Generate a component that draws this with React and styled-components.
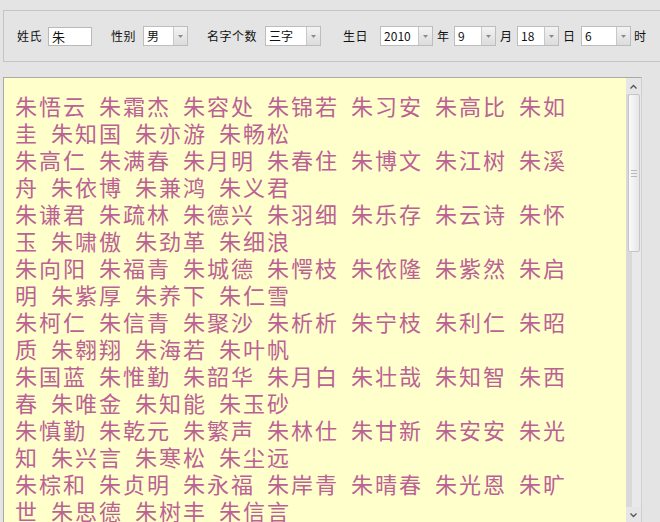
import React from 'react';
import styled, { createGlobalStyle } from 'styled-components';

const GlobalStyle = createGlobalStyle`
  html, body {
    margin: 0;
    padding: 0;
    background: #e4e4e4;
    overflow: hidden;
  }
  body {
    font-family: "Noto Sans CJK SC", "DejaVu Sans", sans-serif;
  }
`;

const Page = styled.div`
  width: 660px;
  height: 522px;
  box-sizing: border-box;
  padding: 10px 0 0 3px;
  overflow: hidden;
`;

const GroupBox = styled.div`
  width: 720px;
  height: 52px;
  box-sizing: border-box;
  border: 1px solid #c4c4c4;
  border-right: none;
  display: flex;
  align-items: center;
  padding-left: 13px;
`;

const Label = styled.span`
  font-size: 12px;
  line-height: 1;
  letter-spacing: 0.5px;
  color: #111;
  white-space: nowrap;
  margin-left: ${p => p.$ml || 0}px;
`;

const TextBox = styled.div`
  width: ${p => p.$w}px;
  height: 19px;
  box-sizing: border-box;
  margin-left: ${p => p.$ml || 0}px;
  border: 1px solid #b9b9b9;
  background: #fff;
  font-size: 13px;
  line-height: 17px;
  padding-left: 3px;
  color: #111;
`;

const SelectBox = styled.div`
  width: ${p => p.$w}px;
  height: 20px;
  box-sizing: border-box;
  margin-left: ${p => p.$ml || 0}px;
  display: flex;
  border: 1px solid #bdbdbd;
  background: #fff;
`;

const SelectValue = styled.div`
  flex: 1;
  font-size: 12px;
  line-height: 18px;
  padding-left: 3px;
  color: #111;
  white-space: nowrap;
`;

const SelectButton = styled.div`
  width: 13px;
  border-left: 1px solid #c8c8c8;
  background: linear-gradient(to bottom, #f3f3f3, #dcdcdc);
  display: flex;
  align-items: center;
  justify-content: center;
`;

const Panel = styled.div`
  width: 639px;
  height: 446px;
  box-sizing: border-box;
  margin-top: 15px;
  border-top: 1px solid #a9a9a9;
  border-left: 1px solid #a9a9a9;
  border-right: 1px solid #cfcfcf;
  display: flex;
`;

const Content = styled.div`
  flex: 1;
  background: #ffffcc;
  padding: 14px 0 0 11px;
  overflow: hidden;
`;

const Names = styled.div`
  width: 560px;
  font-size: 22px;
  line-height: 27px;
  letter-spacing: 2px;
  color: #ba6294;
`;

const Name = styled.span`
  margin-right: 12px;
`;

const ScrollBar = styled.div`
  width: 15px;
  display: flex;
  flex-direction: column;
  background: linear-gradient(to right, #d9d9d9 0, #d9d9d9 6px, #e9e9e9 6px);
`;

const ArrowButton = styled.div`
  height: 16px;
  flex: none;
  display: flex;
  align-items: center;
  justify-content: center;
  background: #e6e6e6;
`;

const Thumb = styled.div`
  height: 158px;
  margin: 0 1px 0 2px;
  box-sizing: border-box;
  border: 1px solid #c6c6c6;
  border-radius: 2px;
  background: linear-gradient(to right, #fafafa, #e6e6e6);
  display: flex;
  align-items: center;
  justify-content: center;
`;

const Grip = styled.div`
  width: 6px;
  height: 5px;
  border-top: 1px solid #b8b8b8;
  border-bottom: 1px solid #b8b8b8;
  position: relative;
  &::after {
    content: "";
    position: absolute;
    left: 0;
    right: 0;
    top: 2px;
    border-top: 1px solid #b8b8b8;
  }
`;

const Track = styled.div`
  flex: 1;
`;

function Chevron({ up, color = '#555', w = 7 }) {
  return (
    <svg width={w} height="5" viewBox="0 0 7 5">
      <path d={up ? 'M0.5 4.5 L3.5 1.5 L6.5 4.5' : 'M0.5 0.5 L3.5 3.5 L6.5 0.5'}
            fill="none" stroke={color} strokeWidth="1.3" />
    </svg>
  );
}

function Select({ value, w, ml }) {
  return (
    <SelectBox $w={w} $ml={ml}>
      <SelectValue>{value}</SelectValue>
      <SelectButton>
        <svg width="5" height="3" viewBox="0 0 5 3">
          <path d="M0 0 L2.5 3 L5 0 Z" fill="#8a8a8a" />
        </svg>
      </SelectButton>
    </SelectBox>
  );
}

const blocks = [
  '朱悟云 朱霜杰 朱容处 朱锦若 朱习安 朱高比 朱如圭 朱知国 朱亦游 朱畅松',
  '朱高仁 朱满春 朱月明 朱春住 朱博文 朱江树 朱溪舟 朱依博 朱兼鸿 朱义君',
  '朱谦君 朱疏林 朱德兴 朱羽细 朱乐存 朱云诗 朱怀玉 朱啸傲 朱劲革 朱细浪',
  '朱向阳 朱福青 朱城德 朱愕枝 朱依隆 朱紫然 朱启明 朱紫厚 朱养下 朱仁雪',
  '朱柯仁 朱信青 朱聚沙 朱析析 朱宁枝 朱利仁 朱昭质 朱翱翔 朱海若 朱叶帆',
  '朱国蓝 朱惟勤 朱韶华 朱月白 朱壮哉 朱知智 朱西春 朱唯金 朱知能 朱玉砂',
  '朱慎勤 朱乾元 朱繁声 朱林仕 朱甘新 朱安安 朱光知 朱兴言 朱寒松 朱尘远',
  '朱棕和 朱贞明 朱永福 朱岸青 朱晴春 朱光恩 朱旷世 朱思德 朱树丰 朱信言',
];

export default function App() {
  return (
    <Page>
      <GlobalStyle />
      <GroupBox>
        <Label>姓氏</Label>
        <TextBox $w={44} $ml={6}>朱</TextBox>
        <Label $ml={19}>性别</Label>
        <Select value="男" w={45} ml={7} />
        <Label $ml={19}>名字个数</Label>
        <Select value="三字" w={56} ml={8} />
        <Label $ml={22}>生日</Label>
        <Select value="2010" w={53} ml={12} />
        <Label $ml={4}>年</Label>
        <Select value="9" w={42} ml={4.5} />
        <Label $ml={4}>月</Label>
        <Select value="18" w={42} ml={4.5} />
        <Label $ml={4}>日</Label>
        <Select value="6" w={50} ml={5.5} />
        <Label $ml={3}>时</Label>
      </GroupBox>
      <Panel>
        <Content>
          <Names>
            {blocks.map((b, i) => (
              <div key={i}>
                {b.split(' ').map((n, j) => <Name key={j}>{n}</Name>)}
              </div>
            ))}
          </Names>
        </Content>
        <ScrollBar>
          <ArrowButton><Chevron up /></ArrowButton>
          <Thumb><Grip /></Thumb>
          <Track />
          <ArrowButton><Chevron /></ArrowButton>
        </ScrollBar>
      </Panel>
    </Page>
  );
}
